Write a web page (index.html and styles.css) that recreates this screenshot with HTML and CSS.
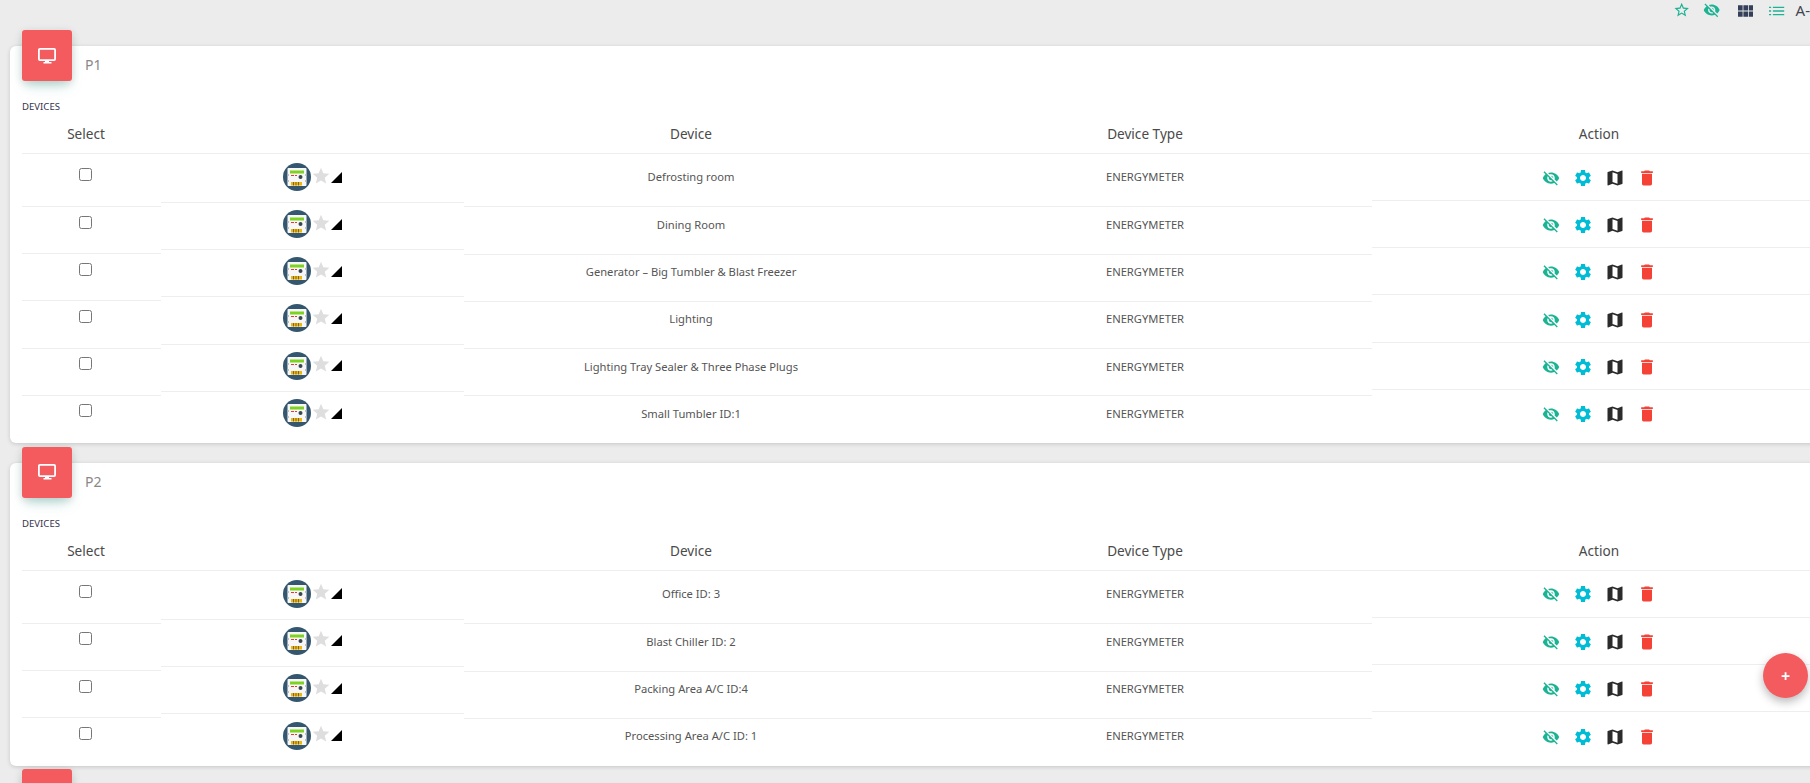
FILE: index.html
```html
<!DOCTYPE html>
<html lang="en">
<head>
<meta charset="utf-8">
<title>Devices</title>
<link rel="stylesheet" href="styles.css">
</head>
<body>
<svg class="defs" width="0" height="0" aria-hidden="true">
  <symbol id="i-star-o" viewBox="0 0 24 24"><path d="M22 9.24l-7.19-.62L12 2 9.19 8.63 2 9.24l5.46 4.73L5.82 21 12 17.27 18.18 21l-1.63-7.03L22 9.24zM12 15.4l-3.76 2.27 1-4.28-3.32-2.88 4.38-.38L12 6.1l1.71 4.04 4.38.38-3.32 2.88 1 4.28L12 15.4z"/></symbol>
  <symbol id="i-star" viewBox="0 0 24 24"><path d="M12 17.27L18.18 21l-1.64-7.03L22 9.24l-7.19-.61L12 2 9.19 8.63 2 9.24l5.46 4.73L5.82 21z"/></symbol>
  <symbol id="i-eye" viewBox="0 0 24 24"><path d="M12 7c2.76 0 5 2.24 5 5 0 .65-.13 1.26-.36 1.83l2.92 2.92c1.51-1.26 2.7-2.89 3.43-4.75-1.73-4.39-6-7.5-11-7.5-1.4 0-2.74.25-3.98.7l2.16 2.16C10.74 7.13 11.35 7 12 7zM2 4.27l2.28 2.28.46.46C3.08 8.3 1.78 10.02 1 12c1.73 4.39 6 7.5 11 7.5 1.55 0 3.03-.3 4.38-.84l.42.42L19.73 22 21 20.73 3.27 3 2 4.27zM7.53 9.8l1.55 1.55c-.05.21-.08.43-.08.65 0 1.66 1.34 3 3 3 .22 0 .44-.03.65-.08l1.55 1.55c-.67.33-1.41.53-2.2.53-2.76 0-5-2.24-5-5 0-.79.2-1.53.53-2.2zm4.31-.78l3.15 3.15.02-.16c0-1.66-1.34-3-3-3l-.17.01z"/></symbol>
  <symbol id="i-gear" viewBox="0 0 24 24"><path d="M19.14 12.94c.04-.3.06-.61.06-.94 0-.32-.02-.64-.07-.94l2.03-1.58c.18-.14.23-.41.12-.61l-1.92-3.32c-.12-.22-.37-.29-.59-.22l-2.39.96c-.5-.38-1.03-.7-1.62-.94l-.36-2.54c-.04-.24-.24-.41-.48-.41h-3.84c-.24 0-.43.17-.47.41l-.36 2.54c-.59.24-1.13.57-1.62.94l-2.39-.96c-.22-.08-.47 0-.59.22L2.74 8.87c-.12.21-.08.47.12.61l2.03 1.58c-.05.3-.09.63-.09.94s.02.64.07.94l-2.03 1.58c-.18.14-.23.41-.12.61l1.92 3.32c.12.22.37.29.59.22l2.39-.96c.5.38 1.03.7 1.62.94l.36 2.54c.05.24.24.41.48.41h3.84c.24 0 .44-.17.47-.41l.36-2.54c.59-.24 1.13-.56 1.62-.94l2.39.96c.22.08.47 0 .59-.22l1.92-3.32c.12-.22.07-.47-.12-.61l-2.01-1.58zM12 15.6c-1.98 0-3.6-1.62-3.6-3.6s1.62-3.6 3.6-3.6 3.6 1.62 3.6 3.6-1.62 3.6-3.6 3.6z"/></symbol>
  <symbol id="i-map" viewBox="0 0 24 24"><path d="M20.5 3l-.16.03L15 5.1 9 3 3.36 4.9c-.21.07-.36.25-.36.48V20.5c0 .28.22.5.5.5l.16-.03L9 18.9l6 2.1 5.64-1.9c.21-.07.36-.25.36-.48V3.5c0-.28-.22-.5-.5-.5zM15 19l-6-2.11V5l6 2.11V19z"/></symbol>
  <symbol id="i-trash" viewBox="0 0 24 24"><path d="M6 19c0 1.1.9 2 2 2h8c1.1 0 2-.9 2-2V7H6v12zM19 4h-3.5l-1-1h-5l-1 1H5v2h14V4z"/></symbol>
  <symbol id="i-grid" viewBox="0 0 16 12"><path d="M0 0h4.8v5.6H0zM5.6 0h4.8v5.6H5.6zM11.2 0H16v5.6h-4.8zM0 6.4h4.8V12H0zM5.6 6.4h4.8V12H5.6zM11.2 6.4H16V12h-4.8z"/></symbol>
  <symbol id="i-list" viewBox="0 0 16 12"><path d="M0 1.500h2.200V3H0zM0 5.200h2.200v1.500H0zM0 9h2.200v1.500H0zM4 1.500h12V3H4zM4 5.200h12v1.500H4zM4 9h12v1.500H4z"/></symbol>
  <symbol id="i-desktop" viewBox="0 0 18 16"><path fill="none" stroke="#fff" stroke-width="1.8" d="M1.900.9h14.200a1 1 0 0 1 1 1v9.200a1 1 0 0 1-1 1H1.900a1 1 0 0 1-1-1V1.900a1 1 0 0 1 1-1z"/><path fill="#fff" d="M7 12h4v2h2.500v1.600h-8V14H7z"/></symbol>
  <symbol id="i-meter" viewBox="0 0 28 28">
    <circle cx="14" cy="14" r="14" fill="#34566f"/>
    <path fill="#f7f7f7" d="M5.500 5h17a1 1 0 0 1 1 1v16a1 1 0 0 1-1 1h-17a1 1 0 0 1-1-1V6a1 1 0 0 1 1-1z"/>
    <path fill="#b5b5b5" d="M4.500 11h1.300v2H4.500zM22.200 11h1.300v2h-1.300zM4.500 17h1.300v2H4.500zM22.200 17h1.300v2h-1.300z"/>
    <path fill="#7ed321" d="M7 7.500h14v3H7z"/>
    <path fill="#e53935" d="M8 12h3v1H8zM12 12h2v1h-2z"/>
    <circle cx="17.500" cy="14" r="2" fill="#37474f"/>
    <path fill="#f2b705" d="M8 19h11v3.500H8z"/>
    <path fill="#555" d="M10 19h.8v3.500H10zM12.600 19h.8v3.500h-.8zM15.200 19h.8v3.500h-.8z"/>
  </symbol>
</svg>

<nav class="topbar">
  <svg class="top-icon teal"><use href="#i-star-o"/></svg>
  <svg class="top-icon teal"><use href="#i-eye"/></svg>
  <svg class="top-grid navy"><use href="#i-grid"/></svg>
  <svg class="top-grid teal"><use href="#i-list"/></svg>
  <span class="font-size">A-</span>
</nav>

<main class="page">
  <section class="card">
    <div class="tile"><svg class="tile-icon"><use href="#i-desktop"/></svg></div>
    <h2 class="card-title">P1</h2>
    <h3 class="card-label">DEVICES</h3>
    <div class="grid">
      <div class="col col-select">
        <div class="head">Select</div>
        <div class="cell"><input class="check" type="checkbox"></div>
        <div class="cell"><input class="check" type="checkbox"></div>
        <div class="cell"><input class="check" type="checkbox"></div>
        <div class="cell"><input class="check" type="checkbox"></div>
        <div class="cell"><input class="check" type="checkbox"></div>
        <div class="cell"><input class="check" type="checkbox"></div>
      </div>
      <div class="col col-icon">
        <div class="head">&nbsp;</div>
        <div class="cell"><svg class="meter"><use href="#i-meter"/></svg><svg class="star"><use href="#i-star"/></svg><svg class="signal" viewBox="0 0 11 11"><path d="M0 11h11V0z"/></svg></div>
        <div class="cell"><svg class="meter"><use href="#i-meter"/></svg><svg class="star"><use href="#i-star"/></svg><svg class="signal" viewBox="0 0 11 11"><path d="M0 11h11V0z"/></svg></div>
        <div class="cell"><svg class="meter"><use href="#i-meter"/></svg><svg class="star"><use href="#i-star"/></svg><svg class="signal" viewBox="0 0 11 11"><path d="M0 11h11V0z"/></svg></div>
        <div class="cell"><svg class="meter"><use href="#i-meter"/></svg><svg class="star"><use href="#i-star"/></svg><svg class="signal" viewBox="0 0 11 11"><path d="M0 11h11V0z"/></svg></div>
        <div class="cell"><svg class="meter"><use href="#i-meter"/></svg><svg class="star"><use href="#i-star"/></svg><svg class="signal" viewBox="0 0 11 11"><path d="M0 11h11V0z"/></svg></div>
        <div class="cell"><svg class="meter"><use href="#i-meter"/></svg><svg class="star"><use href="#i-star"/></svg><svg class="signal" viewBox="0 0 11 11"><path d="M0 11h11V0z"/></svg></div>
      </div>
      <div class="col col-text">
        <div class="head">Device</div>
        <div class="cell">Defrosting room</div>
        <div class="cell">Dining Room</div>
        <div class="cell">Generator – Big Tumbler &amp; Blast Freezer</div>
        <div class="cell">Lighting</div>
        <div class="cell">Lighting Tray Sealer &amp; Three Phase Plugs</div>
        <div class="cell">Small Tumbler ID:1</div>
      </div>
      <div class="col col-text">
        <div class="head">Device Type</div>
        <div class="cell">ENERGYMETER</div>
        <div class="cell">ENERGYMETER</div>
        <div class="cell">ENERGYMETER</div>
        <div class="cell">ENERGYMETER</div>
        <div class="cell">ENERGYMETER</div>
        <div class="cell">ENERGYMETER</div>
      </div>
      <div class="col col-action">
        <div class="head">Action</div>
        <div class="cell"><svg class="act act-eye teal"><use href="#i-eye"/></svg><svg class="act cyan"><use href="#i-gear"/></svg><svg class="act dark"><use href="#i-map"/></svg><svg class="act red"><use href="#i-trash"/></svg></div>
        <div class="cell"><svg class="act act-eye teal"><use href="#i-eye"/></svg><svg class="act cyan"><use href="#i-gear"/></svg><svg class="act dark"><use href="#i-map"/></svg><svg class="act red"><use href="#i-trash"/></svg></div>
        <div class="cell"><svg class="act act-eye teal"><use href="#i-eye"/></svg><svg class="act cyan"><use href="#i-gear"/></svg><svg class="act dark"><use href="#i-map"/></svg><svg class="act red"><use href="#i-trash"/></svg></div>
        <div class="cell"><svg class="act act-eye teal"><use href="#i-eye"/></svg><svg class="act cyan"><use href="#i-gear"/></svg><svg class="act dark"><use href="#i-map"/></svg><svg class="act red"><use href="#i-trash"/></svg></div>
        <div class="cell"><svg class="act act-eye teal"><use href="#i-eye"/></svg><svg class="act cyan"><use href="#i-gear"/></svg><svg class="act dark"><use href="#i-map"/></svg><svg class="act red"><use href="#i-trash"/></svg></div>
        <div class="cell"><svg class="act act-eye teal"><use href="#i-eye"/></svg><svg class="act cyan"><use href="#i-gear"/></svg><svg class="act dark"><use href="#i-map"/></svg><svg class="act red"><use href="#i-trash"/></svg></div>
      </div>
    </div>
  </section>

  <section class="card">
    <div class="tile"><svg class="tile-icon"><use href="#i-desktop"/></svg></div>
    <h2 class="card-title">P2</h2>
    <h3 class="card-label">DEVICES</h3>
    <div class="grid">
      <div class="col col-select">
        <div class="head">Select</div>
        <div class="cell"><input class="check" type="checkbox"></div>
        <div class="cell"><input class="check" type="checkbox"></div>
        <div class="cell"><input class="check" type="checkbox"></div>
        <div class="cell"><input class="check" type="checkbox"></div>
      </div>
      <div class="col col-icon">
        <div class="head">&nbsp;</div>
        <div class="cell"><svg class="meter"><use href="#i-meter"/></svg><svg class="star"><use href="#i-star"/></svg><svg class="signal" viewBox="0 0 11 11"><path d="M0 11h11V0z"/></svg></div>
        <div class="cell"><svg class="meter"><use href="#i-meter"/></svg><svg class="star"><use href="#i-star"/></svg><svg class="signal" viewBox="0 0 11 11"><path d="M0 11h11V0z"/></svg></div>
        <div class="cell"><svg class="meter"><use href="#i-meter"/></svg><svg class="star"><use href="#i-star"/></svg><svg class="signal" viewBox="0 0 11 11"><path d="M0 11h11V0z"/></svg></div>
        <div class="cell"><svg class="meter"><use href="#i-meter"/></svg><svg class="star"><use href="#i-star"/></svg><svg class="signal" viewBox="0 0 11 11"><path d="M0 11h11V0z"/></svg></div>
      </div>
      <div class="col col-text">
        <div class="head">Device</div>
        <div class="cell">Office ID: 3</div>
        <div class="cell">Blast Chiller ID: 2</div>
        <div class="cell">Packing Area A/C ID:4</div>
        <div class="cell">Processing Area A/C ID: 1</div>
      </div>
      <div class="col col-text">
        <div class="head">Device Type</div>
        <div class="cell">ENERGYMETER</div>
        <div class="cell">ENERGYMETER</div>
        <div class="cell">ENERGYMETER</div>
        <div class="cell">ENERGYMETER</div>
      </div>
      <div class="col col-action">
        <div class="head">Action</div>
        <div class="cell"><svg class="act act-eye teal"><use href="#i-eye"/></svg><svg class="act cyan"><use href="#i-gear"/></svg><svg class="act dark"><use href="#i-map"/></svg><svg class="act red"><use href="#i-trash"/></svg></div>
        <div class="cell"><svg class="act act-eye teal"><use href="#i-eye"/></svg><svg class="act cyan"><use href="#i-gear"/></svg><svg class="act dark"><use href="#i-map"/></svg><svg class="act red"><use href="#i-trash"/></svg></div>
        <div class="cell"><svg class="act act-eye teal"><use href="#i-eye"/></svg><svg class="act cyan"><use href="#i-gear"/></svg><svg class="act dark"><use href="#i-map"/></svg><svg class="act red"><use href="#i-trash"/></svg></div>
        <div class="cell"><svg class="act act-eye teal"><use href="#i-eye"/></svg><svg class="act cyan"><use href="#i-gear"/></svg><svg class="act dark"><use href="#i-map"/></svg><svg class="act red"><use href="#i-trash"/></svg></div>
      </div>
    </div>
  </section>

  <section class="card card-next">
    <div class="tile"><svg class="tile-icon"><use href="#i-desktop"/></svg></div>
  </section>
</main>

<button class="fab" type="button">+</button>
</body>
</html>
```

FILE: styles.css
```css
html, body {
  margin: 0;
  height: 100%;
  overflow: hidden;
}

body {
  background: #ececec;
  color: #555;
  font-family: "Noto Sans", "Open Sans", sans-serif;
  font-size: 11.2px;
}

.defs {
  position: absolute;
}

.teal { fill: #1cb394; }
.navy { fill: #34405a; }
.cyan { fill: #00bcd4; }
.dark { fill: #2b2b2b; }
.red { fill: #f44336; }

.topbar {
  box-sizing: border-box;
  height: 46px;
  padding: 1px 0 0 1673px;
  display: flex;
  align-items: flex-start;
  white-space: nowrap;
}

.top-icon {
  width: 18px;
  height: 18px;
  margin-right: 13px;
}

.top-grid {
  width: 16px;
  height: 12px;
  margin: 4px 16px 0 0;
}

.top-icon + .top-grid {
  margin-left: 4px;
}

.font-size {
  margin: -1px 0 0 -5px;
  font-size: 15px;
  line-height: 20px;
  color: #3f4650;
}

.page {
  padding-left: 10px;
  width: 1850px;
}

.card {
  position: relative;
  box-sizing: border-box;
  margin-bottom: 19.6px;
  padding: 0 12px;
  background: #fff;
  border-radius: 6px;
  box-shadow: 0 1px 4px rgba(0, 0, 0, 0.16);
}

.card-next {
  height: 120px;
}

.tile {
  position: absolute;
  left: 12px;
  top: -16px;
  width: 50px;
  height: 51px;
  display: flex;
  align-items: center;
  justify-content: center;
  background: #f45b5f;
  border-radius: 3px;
  box-shadow: 0 8px 12px -4px rgba(60, 170, 150, 0.35), 0 2px 8px rgba(0, 0, 0, 0.14);
}

.tile-icon {
  width: 18px;
  height: 16px;
}

.card-title {
  margin: 0;
  height: 38px;
  padding-left: 63px;
  font-size: 14px;
  font-weight: 400;
  line-height: 38px;
  color: #888;
}

.card-label {
  margin: 16px 0 0;
  height: 14px;
  font-size: 9.6px;
  font-weight: 400;
  line-height: 14px;
  color: #33334d;
}

.grid {
  display: flex;
}

.col {
  flex: none;
  text-align: center;
}

.col-select { width: 139px; }
.col-icon { width: 303px; }
.col-text { width: 454px; }
.col-action { width: 454px; }

.head {
  box-sizing: border-box;
  height: 40px;
  padding-top: 10px;
  font-size: 13.6px;
  line-height: 20px;
  color: #4a4a4a;
  border-bottom: 1px solid #eee;
}

.col-select .head {
  padding-right: 11px;
}

.cell {
  box-sizing: border-box;
  height: 47.2px;
  border-bottom: 1px solid #eee;
}

.cell:last-child {
  border-bottom: 0;
}

.col-select .cell {
  padding: 8.5px 12.500px 0 0;
}

.col-select .cell:nth-child(2) {
  height: 53px;
  padding-top: 14px;
}

.check {
  display: block;
  width: 13px;
  height: 13px;
  margin: 0 auto;
}

.col-icon .cell {
  display: flex;
  align-items: center;
  justify-content: center;
  padding: 7px 0 11.200px;
}

.col-icon .cell:nth-child(2) {
  height: 49px;
  padding: 9px 0 11px;
}

.meter {
  flex: none;
  width: 28px;
  height: 28px;
}

.star {
  flex: none;
  width: 20px;
  height: 20px;
  margin-top: -3px;
  fill: #dedede;
}

.signal {
  flex: none;
  width: 11px;
  height: 11px;
  fill: #000;
}

.col-text .cell {
  padding-top: 9.7px;
  line-height: 16px;
}

.col-text .cell:nth-child(2) {
  height: 53.4px;
  padding-top: 15px;
}

.col-action .cell {
  padding-top: 14.300px;
  display: flex;
  justify-content: center;
  gap: 12px;
}

.col-action .cell:nth-child(2) {
  height: 47px;
  padding-top: 13.500px;
}

.act {
  flex: none;
  width: 20px;
  height: 20px;
}

.act-eye {
  width: 18px;
  height: 18px;
  margin: 1px;
}

.fab {
  position: fixed;
  left: 1763px;
  top: 653px;
  width: 45px;
  height: 45px;
  padding: 0;
  border: 0;
  border-radius: 50%;
  background: #f45b5f;
  color: #fff;
  font-family: "Noto Sans", sans-serif;
  font-size: 16px;
  font-weight: 700;
  box-shadow: 0 4px 10px rgba(0, 0, 0, 0.28);
}
```
